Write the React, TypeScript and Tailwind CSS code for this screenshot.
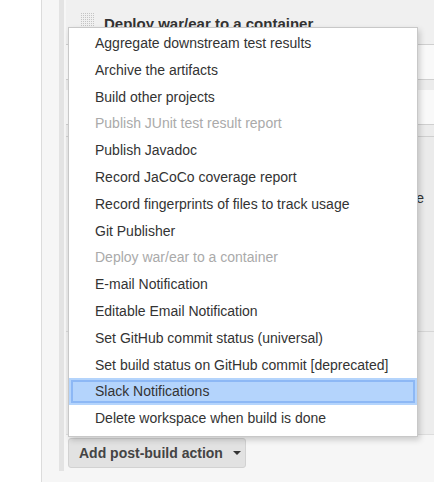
const items: { label: string; disabled?: boolean; active?: boolean }[] = [
  { label: "Aggregate downstream test results" },
  { label: "Archive the artifacts" },
  { label: "Build other projects" },
  { label: "Publish JUnit test result report", disabled: true },
  { label: "Publish Javadoc" },
  { label: "Record JaCoCo coverage report" },
  { label: "Record fingerprints of files to track usage" },
  { label: "Git Publisher" },
  { label: "Deploy war/ear to a container", disabled: true },
  { label: "E-mail Notification" },
  { label: "Editable Email Notification" },
  { label: "Set GitHub commit status (universal)" },
  { label: "Set build status on GitHub commit [deprecated]" },
  { label: "Slack Notifications", active: true },
  { label: "Delete workspace when build is done" },
];

function DragHandle() {
  const dots = [];
  for (let r = 0; r < 7; r++) {
    for (let c = 0; c < 7; c++) {
      dots.push(<rect key={`${r}-${c}`} x={c * 2} y={r * 2} width="1" height="1" />);
    }
  }
  return (
    <svg width="13" height="13" viewBox="0 0 13 13" className="fill-[#c4c4c4]">
      {dots}
    </svg>
  );
}

export default function App() {
  return (
    <div className="relative flex h-[482px] w-[434px] overflow-hidden bg-white font-['Liberation_Sans',Arial,sans-serif] text-[14px]">
      <div className="w-[42px] shrink-0 border-r border-[#dcdcdc] bg-white" />

      <div className="flex-1 bg-[#f6f6f6] pl-[17px]">
        <div className="border-l-[5px] border-[#e3e3e3] pb-[3px] pl-[2px]">
          {/* Deploy war/ear panel, mostly hidden under the menu */}
          <div className="bg-[#f0f0f0]">
            <div className="flex h-[44px] items-start gap-[9px] pl-[15px] pt-[13px]">
              <div className="pt-0">
                <DragHandle />
              </div>
              <span className="pl-px pt-[2px] text-[15px] font-bold leading-[18px] text-[#333]">
                Deploy war/ear to a container
              </span>
            </div>
            <div className="h-[35px] border-t border-[#cfcfcf] bg-[#f9f9f9]" />
            <div className="border-t border-[#cfcfcf]">
              <div className="h-[10px] bg-[#ececec]" />
              <div className="h-[34px] bg-[#f9f9f9]" />
            </div>
            <div className="h-[12px] border-t border-[#cfcfcf] bg-[#ececec]" />
            <div className="flex h-[195px] justify-end border-t border-[#cfcfcf] bg-[#ebebeb] pr-[10px] pt-[52px]">
              <span className="leading-[18px] text-[#333]">Deploy on failure</span>
            </div>
            <div className="h-[103px] border-t border-[#d6d6d6] bg-[#ededed]" />
          </div>
          <div className="h-px bg-[#dddddd]" />

          <div className="pl-[2px] pt-[3px]">
            <button
              type="button"
              className="flex h-[30px] w-[178px] items-center gap-[10px] rounded-[3px] border border-[#d2d2d2] bg-[#e2e2e2] pl-[10px] text-[14px] font-bold text-[#444]"
            >
              Add post-build action
              <svg width="8" height="4" viewBox="0 0 8 4" className="fill-[#333]">
                <path d="M0 0h8L4 4z" />
              </svg>
            </button>
          </div>
        </div>
      </div>

      {/* dropdown menu */}
      <div className="absolute left-[68px] top-[27px] w-[350px] border border-[#c8c8c8] bg-white pb-[4px] pt-[2px] shadow-[2px_3px_6px_rgba(0,0,0,0.18)]">
        {items.map((item) => (
          <div
            key={item.label}
            className={`h-[26.8px] whitespace-nowrap pl-[26px] leading-[26.8px] ${
              item.disabled ? "text-[#aaaaaa]" : "text-[#333]"
            } ${
              item.active
                ? "bg-[#b4d4fc] shadow-[inset_0_0_0_2px_#b4d4fc,inset_0_0_0_4px_#8db8f5]"
                : ""
            }`}
          >
            {item.label}
          </div>
        ))}
      </div>
    </div>
  );
}
